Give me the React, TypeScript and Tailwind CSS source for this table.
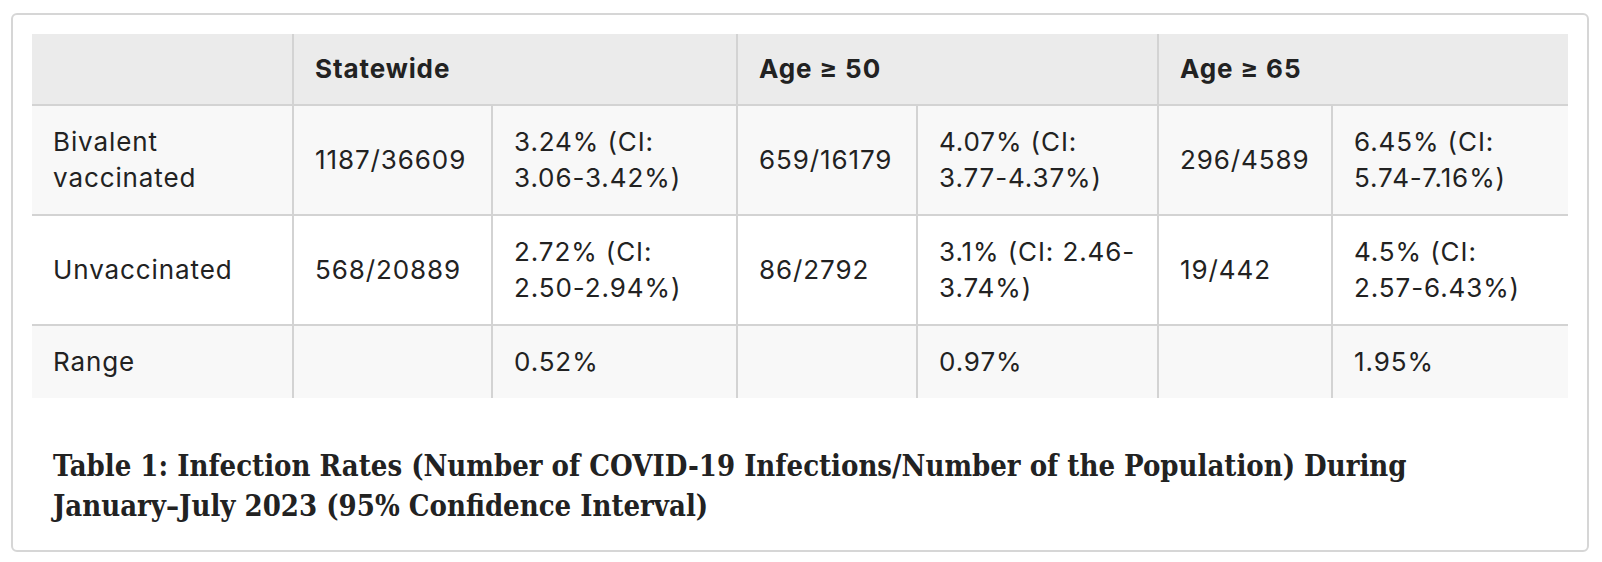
const rows = [
  {
    label: "Bivalent vaccinated",
    cells: ["1187/36609", "3.24% (CI: 3.06-3.42%)", "659/16179", "4.07% (CI: 3.77-4.37%)", "296/4589", "6.45% (CI: 5.74-7.16%)"],
    bg: "bg-[#f8f8f8]",
  },
  {
    label: "Unvaccinated",
    cells: ["568/20889", "2.72% (CI: 2.50-2.94%)", "86/2792", "3.1% (CI: 2.46-3.74%)", "19/442", "4.5% (CI: 2.57-6.43%)"],
    bg: "bg-white",
  },
  {
    label: "Range",
    cells: ["", "0.52%", "", "0.97%", "", "1.95%"],
    bg: "bg-[#f8f8f8]",
  },
];

const widths = ["w-[261px]", "w-[199px]", "w-[245px]", "w-[180px]", "w-[241px]", "w-[174px]", "w-[236px]"];

export default function App() {
  return (
    <div className="min-h-[562px] bg-white pl-[11px] pt-[13px]">
      <figure className="w-[1578px] rounded-md border-2 border-[#d6d6d6] px-[19px] pt-[19px] pb-[24px]">
        <table className="w-[1536px] table-fixed border-collapse font-['Inter',sans-serif] text-[26px] leading-[36px] tracking-[0.9px] text-[#222]">
          <colgroup>
            {widths.map((w) => (
              <col key={w} className={w} />
            ))}
          </colgroup>
          <thead>
            <tr className="bg-[#ebebeb]">
              <th className="border-b-2 border-[#d3d3d3] py-[17px] pl-[21px] pr-[18px]" />
              <th colSpan={2} className="border-b-2 border-l-2 border-[#d3d3d3] py-[17px] pl-[21px] pr-[18px] text-left font-bold">
                Statewide
              </th>
              <th colSpan={2} className="border-b-2 border-l-2 border-[#d3d3d3] py-[17px] pl-[21px] pr-[18px] text-left font-bold">
                Age ≥ 50
              </th>
              <th colSpan={2} className="border-b-2 border-l-2 border-[#d3d3d3] py-[17px] pl-[21px] pr-[18px] text-left font-bold">
                Age ≥ 65
              </th>
            </tr>
          </thead>
          <tbody>
            {rows.map((r, i) => (
              <tr key={r.label} className={r.bg}>
                <td
                  className={`py-[18px] pl-[21px] pr-[18px] align-middle ${i < rows.length - 1 ? "border-b-2 border-[#d3d3d3]" : ""}`}
                >
                  {r.label}
                </td>
                {r.cells.map((c, j) => (
                  <td
                    key={j}
                    className={`border-l-2 border-[#d3d3d3] py-[18px] pl-[21px] pr-[18px] align-middle ${
                      i < rows.length - 1 ? "border-b-2" : ""
                    }`}
                  >
                    {c}
                  </td>
                ))}
              </tr>
            ))}
          </tbody>
        </table>
        <figcaption className="mt-[48px] px-[21px] font-['DejaVu_Serif_Condensed','DejaVu_Serif',serif] text-[29px] font-bold leading-[40px] text-[#222]">
          Table 1: Infection Rates (Number of COVID-19 Infections/Number of the Population) During{" "}
          <span className="whitespace-nowrap">January–July</span> 2023 (95% Confidence Interval)
        </figcaption>
      </figure>
    </div>
  );
}
